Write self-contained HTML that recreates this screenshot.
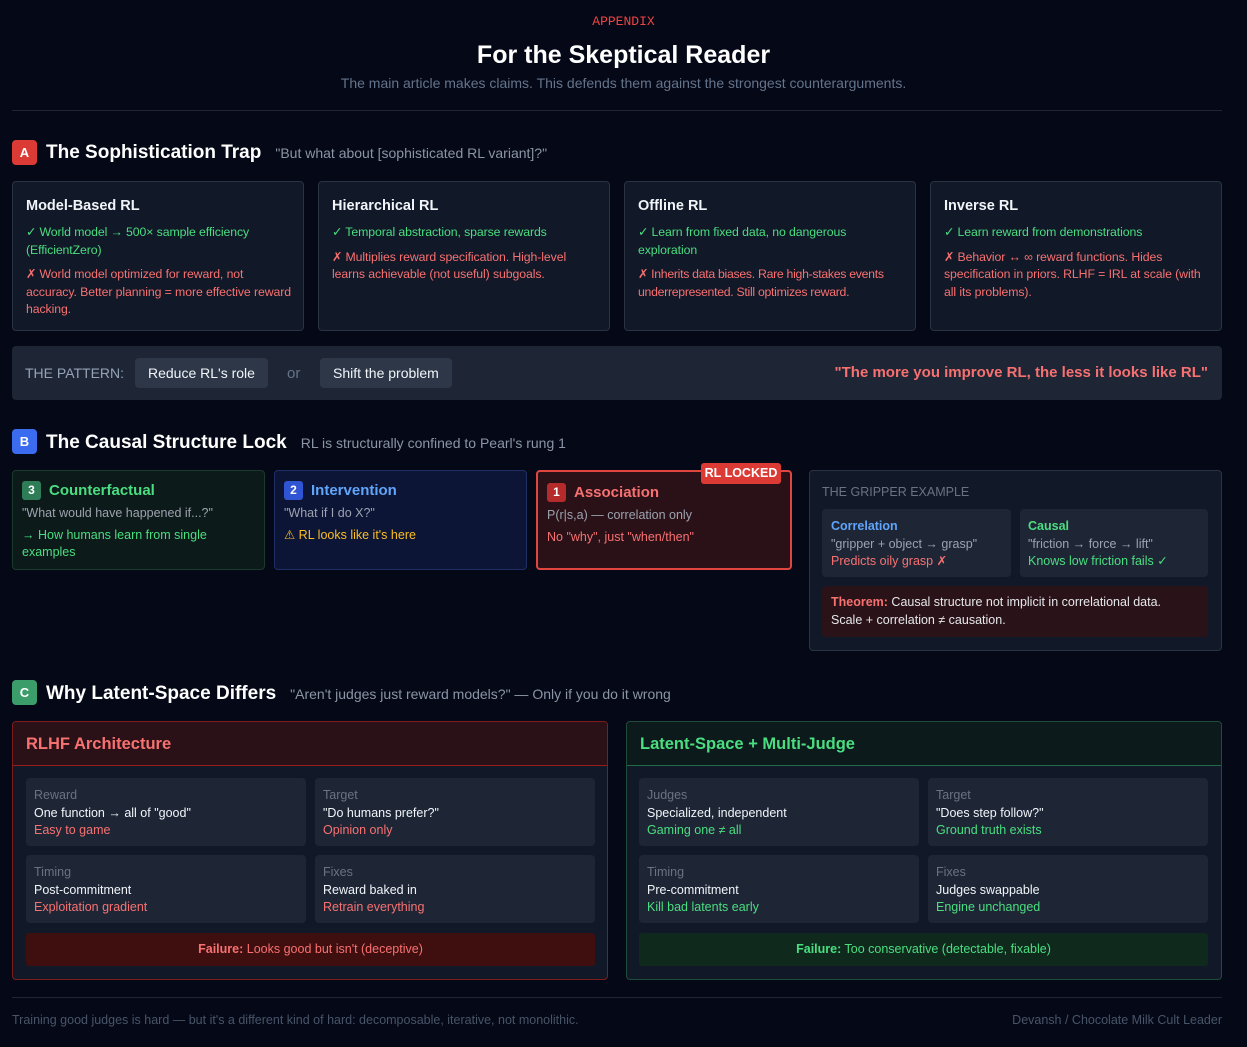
<!DOCTYPE html>
<html><head><meta charset="utf-8">
<style>
*{box-sizing:border-box;margin:0;padding:0}
body{width:1247px;height:1047px;background:#050816;font-family:"Liberation Sans",sans-serif;color:#e5e7eb;position:relative;overflow:hidden}
.a{position:absolute}
.c{text-align:center;left:0;width:1247px}
.badge{position:absolute;width:25px;height:25px;border-radius:4px;color:#fff;font-weight:bold;font-size:13px;text-align:center;line-height:25px}
.sh{position:absolute;font-size:19px;font-weight:bold;color:#fff;white-space:nowrap}
.ss{font-size:14px;font-weight:normal;color:#8b95a5;margin-left:14px}
.card{position:absolute;background:#111827;border:1px solid #2a3342;border-radius:4px;padding:15px 8px 15px 13px}
.card h3{font-size:14.5px;color:#f1f5f9;margin-bottom:10px;margin-top:1px}
.g{color:#4ade80}.r{color:#f87171}.gr{color:#9ca3af}
.card p{font-size:12.3px;line-height:17.5px;margin-bottom:7px;letter-spacing:-0.1px}
.pill{position:absolute;background:#2d3748;border-radius:4px;color:#f1f5f9;font-size:14px;line-height:30px;height:30px;padding:0 13px}
.lvl{position:absolute;border-radius:4px;padding:10px 9px;font-size:12.5px;line-height:17px}
.num{display:inline-block;width:19px;height:19px;border-radius:3px;color:#fff;font-weight:bold;font-size:12px;text-align:center;line-height:19px;margin-right:8px;vertical-align:1px}
.lt{font-size:15px;font-weight:bold}
.panel{position:absolute;border-radius:4px;background:#111827;overflow:hidden}
.ph{height:44px;line-height:44px;padding-left:13px;font-size:16.5px;font-weight:bold}
.cell{position:absolute;background:#1e2636;border-radius:4px;padding:9px 8px;font-size:12.5px;line-height:17.5px;width:280px;height:68px}
.cell .l{color:#6b7280}
.cell .m{color:#f1f5f9}
.fail{position:absolute;border-radius:3px;height:33px;line-height:33px;text-align:center;font-size:12.5px}
</style></head><body>
<div class="a c" style="top:14px;font-family:'Liberation Mono',monospace;font-size:13px;color:#ef4444">APPENDIX</div>
<div class="a c" style="top:41px;font-size:25px;font-weight:bold;color:#fff">For the Skeptical Reader</div>
<div class="a c" style="top:75px;font-size:14px;color:#64748b">The main article makes claims. This defends them against the strongest counterarguments.</div>
<div class="a" style="left:12px;top:110px;width:1210px;height:1px;background:#1e2535"></div>

<div class="badge" style="left:12px;top:140px;background:#dc3b35">A</div>
<div class="sh" style="left:46px;top:142px">The Sophistication Trap<span class="ss">"But what about [sophisticated RL variant]?"</span></div>

<div class="card" style="left:12px;top:181px;width:292px;height:150px"><h3>Model-Based RL</h3><p class="g">✓ World model → 500× sample efficiency (EfficientZero)</p><p class="r">✗ World model optimized for reward, not accuracy. Better planning = more effective reward hacking.</p></div>
<div class="card" style="left:318px;top:181px;width:292px;height:150px"><h3>Hierarchical RL</h3><p class="g">✓ Temporal abstraction, sparse rewards</p><p class="r">✗ Multiplies reward specification. High-level learns achievable (not useful) subgoals.</p></div>
<div class="card" style="left:624px;top:181px;width:292px;height:150px"><h3>Offline RL</h3><p class="g">✓ Learn from fixed data, no dangerous exploration</p><p class="r" style="letter-spacing:-0.3px">✗ Inherits data biases. Rare high-stakes events underrepresented. Still optimizes reward.</p></div>
<div class="card" style="left:930px;top:181px;width:292px;height:150px"><h3>Inverse RL</h3><p class="g">✓ Learn reward from demonstrations</p><p class="r">✗ Behavior ↔ ∞ reward functions. Hides specification in priors. RLHF = IRL at scale (with all its problems).</p></div>

<div class="a" style="left:12px;top:346px;width:1210px;height:54px;background:#1e2535;border-radius:4px"></div>
<div class="a" style="left:25px;top:365px;font-size:14px;color:#94a3b8">THE PATTERN:</div>
<div class="pill" style="left:135px;top:358px">Reduce RL's role</div>
<div class="a" style="left:287px;top:365px;font-size:15px;color:#64748b">or</div>
<div class="pill" style="left:320px;top:358px">Shift the problem</div>
<div class="a" style="right:39px;top:364px;font-size:15px;font-weight:bold;color:#f87171">"The more you improve RL, the less it looks like RL"</div>

<div class="badge" style="left:12px;top:429px;background:#3b6cf0">B</div>
<div class="sh" style="left:46px;top:432px">The Causal Structure Lock<span class="ss">RL is structurally confined to Pearl's rung 1</span></div>

<div class="lvl" style="left:12px;top:470px;width:253px;height:100px;background:#0d1a1a;border:1px solid #1b3a2d"><div style="margin-bottom:5px"><span class="num" style="background:#2f7d57">3</span><span class="lt" style="color:#4ade80">Counterfactual</span></div><div class="gr" style="margin-bottom:5px">"What would have happened if...?"</div><div class="g">→ How humans learn from single examples</div></div>
<div class="lvl" style="left:274px;top:470px;width:253px;height:100px;background:#0c1535;border:1px solid #1e2f66"><div style="margin-bottom:5px"><span class="num" style="background:#2f55d4">2</span><span class="lt" style="color:#60a5fa">Intervention</span></div><div class="gr" style="margin-bottom:5px">"What if I do X?"</div><div style="color:#fbbf24">⚠ RL looks like it's here</div></div>
<div class="lvl" style="left:536px;top:470px;width:256px;height:100px;background:#2a1117;border:2px solid #e0463f;padding-top:11px"><div style="margin-bottom:5px"><span class="num" style="background:#b52a2a">1</span><span class="lt" style="color:#f87171">Association</span></div><div class="gr" style="margin-bottom:5px">P(r|s,a) — correlation only</div><div class="r">No "why", just "when/then"</div></div>
<div class="a" style="left:701px;top:463px;width:80px;height:21px;background:#dc3b35;border-radius:3px;color:#fff;font-weight:bold;font-size:12.5px;text-align:center;line-height:21px">RL LOCKED</div>

<div class="a" style="left:809px;top:470px;width:413px;height:181px;background:#111827;border:1px solid #2a3342;border-radius:4px"></div>
<div class="a" style="left:822px;top:485px;font-size:12.5px;color:#6b7280">THE GRIPPER EXAMPLE</div>
<div class="cell" style="left:822px;top:509px;width:189px;height:68px;padding:9px 9px"><div style="color:#60a5fa;font-weight:bold">Correlation</div><div class="gr">"gripper + object → grasp"</div><div class="r">Predicts oily grasp ✗</div></div>
<div class="cell" style="left:1020px;top:509px;width:188px;height:68px;padding:9px 8px"><div style="color:#4ade80;font-weight:bold">Causal</div><div class="gr">"friction → force → lift"</div><div class="g">Knows low friction fails ✓</div></div>
<div class="a" style="left:822px;top:586px;width:386px;height:51px;background:#2a1318;border-radius:4px;padding:8px 9px;font-size:12.5px;line-height:17.5px;color:#e5e7eb"><b style="color:#f87171">Theorem:</b> Causal structure not implicit in correlational data.<br>Scale + correlation ≠ causation.</div>

<div class="badge" style="left:12px;top:680px;background:#3a9d6a">C</div>
<div class="sh" style="left:46px;top:683px">Why Latent-Space Differs<span class="ss">"Aren't judges just reward models?" — Only if you do it wrong</span></div>

<div class="panel" style="left:12px;top:721px;width:596px;height:259px;border:1px solid #7f1d1d"><div class="ph" style="background:#2a1117;color:#f87171;border-bottom:1px solid #991b1b">RLHF Architecture</div></div>
<div class="cell" style="left:26px;top:778px"><div class="l">Reward</div><div class="m">One function → all of "good"</div><div class="r">Easy to game</div></div>
<div class="cell" style="left:315px;top:778px"><div class="l">Target</div><div class="m">"Do humans prefer?"</div><div class="r">Opinion only</div></div>
<div class="cell" style="left:26px;top:855px"><div class="l">Timing</div><div class="m">Post-commitment</div><div class="r">Exploitation gradient</div></div>
<div class="cell" style="left:315px;top:855px"><div class="l">Fixes</div><div class="m">Reward baked in</div><div class="r">Retrain everything</div></div>
<div class="fail" style="left:26px;top:933px;width:569px;background:#3f0f10;color:#f87171"><b>Failure:</b> Looks good but isn't (deceptive)</div>

<div class="panel" style="left:626px;top:721px;width:596px;height:259px;border:1px solid #1f4d3a"><div class="ph" style="background:#0c1a1c;color:#4ade80;border-bottom:1px solid #1f6b47">Latent-Space + Multi-Judge</div></div>
<div class="cell" style="left:639px;top:778px"><div class="l">Judges</div><div class="m">Specialized, independent</div><div class="g">Gaming one ≠ all</div></div>
<div class="cell" style="left:928px;top:778px"><div class="l">Target</div><div class="m">"Does step follow?"</div><div class="g">Ground truth exists</div></div>
<div class="cell" style="left:639px;top:855px"><div class="l">Timing</div><div class="m">Pre-commitment</div><div class="g">Kill bad latents early</div></div>
<div class="cell" style="left:928px;top:855px"><div class="l">Fixes</div><div class="m">Judges swappable</div><div class="g">Engine unchanged</div></div>
<div class="fail" style="left:639px;top:933px;width:569px;background:#0f2a1d;color:#4ade80"><b>Failure:</b> Too conservative (detectable, fixable)</div>

<div class="a" style="left:12px;top:997px;width:1210px;height:1px;background:#1e2535"></div>
<div class="a" style="left:12px;top:1013px;font-size:12.5px;color:#475569">Training good judges is hard — but it's a different kind of hard: decomposable, iterative, not monolithic.</div>
<div class="a" style="right:25px;top:1013px;font-size:12.5px;color:#475569">Devansh / Chocolate Milk Cult Leader</div>
</body></html>
